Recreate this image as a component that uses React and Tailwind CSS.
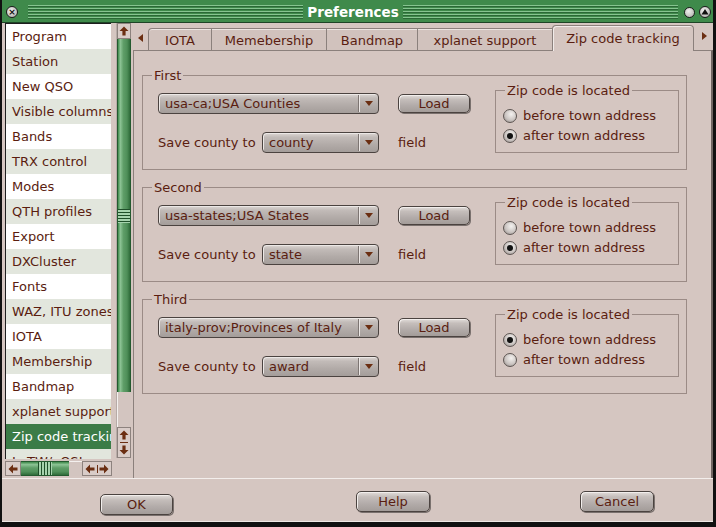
import React from "react";

const items = [
  "Program",
  "Station",
  "New QSO",
  "Visible columns",
  "Bands",
  "TRX control",
  "Modes",
  "QTH profiles",
  "Export",
  "DXCluster",
  "Fonts",
  "WAZ, ITU zones",
  "IOTA",
  "Membership",
  "Bandmap",
  "xplanet support",
  "Zip code tracking",
  "LoTW/eQSL",
];

const frames = [
  { title: "First", list: "usa-ca;USA Counties", field: "county", before: false },
  { title: "Second", list: "usa-states;USA States", field: "state", before: false },
  { title: "Third", list: "italy-prov;Provinces of Italy", field: "award", before: true },
];

// small brown arrows used by scrollbars and tab scrollers
function StemArrow({ dir = "up" }) {
  const rot = { up: 0, right: 90, down: 180, left: 270 }[dir];
  return (
    <svg width="10" height="10" viewBox="0 0 10 10" style={{ transform: `rotate(${rot}deg)` }}>
      <path d="M5 0.5 L9.5 5 H6.6 V9.5 H3.4 V5 H0.5 Z" fill="#6b2e12" />
    </svg>
  );
}

function Tri({ dir = "down" }) {
  const pts = {
    down: "1,2 9,2 5,7",
    left: "7,1 7,9 2,5",
    right: "3,1 3,9 8,5",
  }[dir];
  return (
    <svg width="10" height="10" viewBox="0 0 10 10">
      <polygon points={pts} fill="#6b2e12" />
    </svg>
  );
}

function Combo({ className, text }) {
  return (
    <div
      className={`flex h-[21px] items-center rounded-[4px] border border-[#4b4340] bg-[linear-gradient(to_bottom,#ddd7d4_0%,#c2bbb8_22%,#b2aba8_60%,#a49d9a_100%)] shadow-[inset_1px_1px_0_#ece8e6] ${className}`}
    >
      <span className="flex-1 truncate pl-[6px] leading-[19px]">{text}</span>
      <span className="h-[17px] w-[2px] border-l border-r border-l-[#7d7572] border-r-[#ece7e5]" />
      <span className="flex w-[18px] justify-center">
        <Tri dir="down" />
      </span>
    </div>
  );
}

function Btn({ children, className }) {
  return (
    <div
      className={`flex items-center justify-center rounded-[5px] border border-[#4b4340] bg-[linear-gradient(to_bottom,#e2ddda_0%,#c5bebb_25%,#b3acaa_60%,#a39c99_100%)] shadow-[inset_1px_1px_0_#f2eeec,1px_1px_0_#7a716e] ${className}`}
    >
      {children}
    </div>
  );
}

function Radio({ checked, label }) {
  return (
    <div className="flex h-[20px] items-center">
      <span className="flex h-[14px] w-[14px] items-center justify-center rounded-full border border-[#5d5552] bg-[radial-gradient(circle_at_60%_35%,#f4f1ef_0%,#cbc5c2_55%,#8f8784_100%)]">
        {checked && <span className="h-[6px] w-[6px] rounded-full bg-[#111]" />}
      </span>
      <span className="ml-[6px]">{label}</span>
    </div>
  );
}

function Frame({ f }) {
  return (
    <fieldset className="w-[545px] border border-[#9b8b86] pb-[16px]">
      <legend className="ml-[9px] px-[2px] leading-[15px]">{f.title}</legend>
      <div className="flex items-start pl-[15px]">
        <div className="flex flex-col pt-[10px]">
          <div className="flex items-center">
            <Combo className="w-[221px]" text={f.list} />
            <Btn className="ml-[19px] h-[19px] w-[72px]">Load</Btn>
          </div>
          <div className="mt-[18px] flex h-[21px] items-center">
            <span className="w-[104px]">Save county to</span>
            <Combo className="w-[117px]" text={f.field} />
            <span className="ml-[19px]">field</span>
          </div>
        </div>
        <fieldset className="ml-auto mr-[7px] w-[184px] border border-[#9b8b86] pb-[6px] pl-[7px]">
          <legend className="ml-[2px] px-[2px] leading-[15px]">Zip code is located</legend>
          <div className="pt-[8px]">
            <Radio checked={f.before} label="before town address" />
            <Radio checked={!f.before} label="after town address" />
          </div>
        </fieldset>
      </div>
    </fieldset>
  );
}

const stripes =
  "h-[15px] flex-1 bg-[repeating-linear-gradient(to_bottom,#86c490_0px,#86c490_1px,#2b6836_1px,#2b6836_2px,#3f8a4b_2px,#3f8a4b_3px)]";

export default function App() {
  return (
    <div className="flex h-[527px] w-[716px] flex-col border-b-[5px] border-l-2 border-r-[3px] border-[#111] bg-[#d5c6c1] font-['DejaVu_Sans',sans-serif] text-[13px] text-[#5a1d10]">
      {/* title bar */}
      <div className="flex h-[23px] shrink-0 items-center border-b border-[#1e4426] bg-[#3f8a4b] pt-[2px]">
        <span className="ml-[4px] flex h-[12px] w-[12px] items-center justify-center rounded-full border border-[#1d1d1d] bg-[radial-gradient(circle_at_40%_35%,#f0f0ee,#a9a9a5)] text-[9px] font-bold leading-none text-[#111]">
          ×
        </span>
        <div className={`ml-[10px] ${stripes}`} />
        <span className="px-[4px] text-[13.5px] font-bold text-white">Preferences</span>
        <div className={stripes} />
        <span className="ml-[6px] h-[11px] w-[11px] rounded-full border border-[#1d1d1d] bg-[radial-gradient(circle_at_40%_35%,#f0f0ee,#a9a9a5)]" />
        <span className="ml-[4px] mr-[2px] flex h-[12px] w-[12px] items-center justify-center rounded-full border border-[#1d1d1d] bg-[radial-gradient(circle_at_40%_35%,#f0f0ee,#a9a9a5)]">
          <svg width="8" height="8" viewBox="0 0 8 8">
            <polygon points="4,1 7.5,6.5 0.5,6.5" fill="#111" />
          </svg>
        </span>
      </div>

      {/* main area */}
      <div className="flex h-[456px] shrink-0 border-b border-[#f3eeec]">
        {/* left list + scrollbars */}
        <div className="ml-[3px] flex w-[126px] flex-col">
          <div className="flex h-[436px]">
            <div className="h-[436px] w-[106px] overflow-hidden border-l border-t border-[#1e1e1e] bg-white">
              {items.map((it, i) => (
                <div
                  key={it}
                  className={`h-[25px] whitespace-nowrap pl-[6px] leading-[25px] ${
                    i === 16 ? "bg-[#3b7c47] text-white" : i % 2 ? "bg-[#e2e6dd]" : "bg-white"
                  }`}
                >
                  {it}
                </div>
              ))}
            </div>
            <div className="ml-[5px] flex h-[435px] w-[15px] flex-col border-l border-[#b7aba7]">
              <div className="flex h-[16px] items-center justify-center border border-[#8d827e] bg-[#d9ccc8]">
                <StemArrow dir="up" />
              </div>
              <div className="flex h-[353px] items-center border-x border-[#245a2f] bg-[linear-gradient(to_right,#3f8a4b_0%,#8cc394_20%,#5f9e68_45%,#4f8f59_75%,#2f6c3a_100%)]">
                <div className="h-[14px] w-full bg-[repeating-linear-gradient(to_bottom,#1f4f29_0px,#1f4f29_1px,#a6d3ad_1px,#a6d3ad_3px)]" />
              </div>
              <div className="flex-1 border-l border-[#f4f0ee] bg-[#d3c5c0]" />
              <div className="flex h-[31px] flex-col items-center justify-between border border-[#8d827e] bg-[#d9ccc8] py-[2px]">
                <StemArrow dir="up" />
                <span className="h-px w-[8px] bg-[#6b2e12]" />
                <StemArrow dir="down" />
              </div>
            </div>
          </div>
          <div className="mt-[2px] flex h-[15px] w-[107px]">
            <div className="flex w-[16px] items-center justify-center border border-[#8d827e] bg-[#d9ccc8]">
              <StemArrow dir="left" />
            </div>
            <div className="flex w-[48px] justify-center border-y border-[#245a2f] bg-[linear-gradient(to_bottom,#3f8a4b_0%,#8cc394_20%,#5f9e68_45%,#4f8f59_75%,#2f6c3a_100%)]">
              <div className="h-full w-[14px] bg-[repeating-linear-gradient(to_right,#1f4f29_0px,#1f4f29_1px,#a6d3ad_1px,#a6d3ad_3px)]" />
            </div>
            <div className="flex-1 border-t border-[#f4f0ee] bg-[#d3c5c0]" />
            <div className="flex w-[30px] items-center justify-between border border-[#8d827e] bg-[#d9ccc8] px-[2px]">
              <StemArrow dir="left" />
              <span className="h-[8px] w-px bg-[#6b2e12]" />
              <StemArrow dir="right" />
            </div>
          </div>
        </div>

        {/* notebook */}
        <div className="ml-[2px] flex flex-1 flex-col">
          <div className="flex h-[27px] items-end">
            <div className="flex h-[27px] w-[15px] items-center justify-center pt-[2px]">
              <Tri dir="left" />
            </div>
            {["IOTA", "Memebership", "Bandmap", "xplanet support"].map((t, i) => (
              <div
                key={t}
                className={`flex h-[22px] items-center justify-center border-l border-t border-[#8b807c] bg-[#d1c2bd] pt-[2px] shadow-[inset_0_1px_0_#ece5e2] ${
                  ["w-[63px] rounded-tl-[4px]", "w-[115px]", "w-[91px]", "w-[135px]"][i]
                }`}
              >
                {t}
              </div>
            ))}
            <div className="z-10 -mb-px flex h-[26px] w-[142px] items-center justify-center rounded-t-[4px] border-x border-t border-[#8b807c] bg-[#d5c6c1] pt-[1px] shadow-[inset_1px_1px_0_#f1ebe9]">
              Zip code tracking
            </div>
            <div className="flex h-[27px] flex-1 items-center justify-center pb-[2px]">
              <Tri dir="right" />
            </div>
          </div>
          <div className="flex flex-1 flex-col gap-[10px] border-l border-r-2 border-t border-[#8b807c] border-r-[#6f6562] pl-[8px] pt-[17px]">
            {frames.map((f) => (
              <Frame key={f.title} f={f} />
            ))}
          </div>
        </div>
      </div>

      {/* dialog buttons */}
      <div className="flex flex-1 items-start border-b border-[#efe9e6]">
        <Btn className="ml-[98px] mt-[15px] h-[21px] w-[73px]">OK</Btn>
        <Btn className="ml-[183px] mt-[12px] h-[21px] w-[74px]">Help</Btn>
        <Btn className="ml-[150px] mt-[12px] h-[21px] w-[74px]">Cancel</Btn>
      </div>
    </div>
  );
}
